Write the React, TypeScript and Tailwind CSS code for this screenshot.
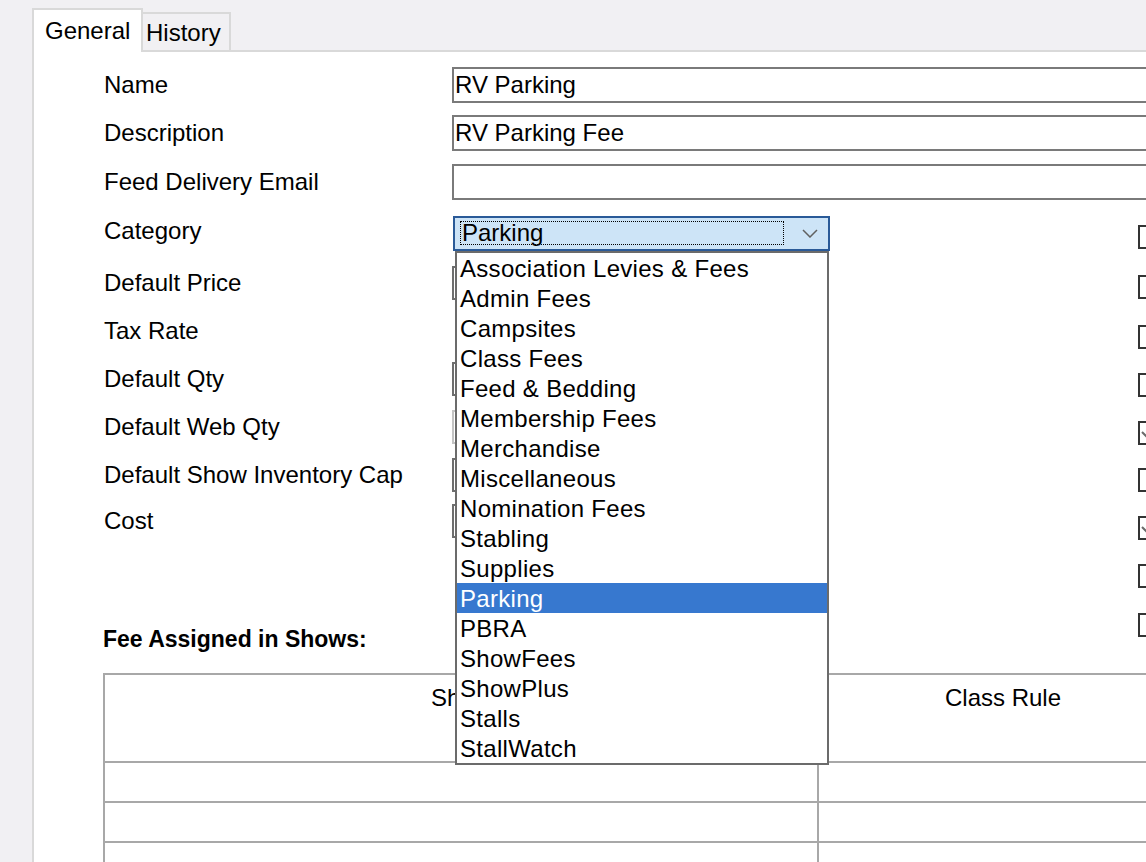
import React from 'react';

const categories = [
  'Association Levies & Fees',
  'Admin Fees',
  'Campsites',
  'Class Fees',
  'Feed & Bedding',
  'Membership Fees',
  'Merchandise',
  'Miscellaneous',
  'Nomination Fees',
  'Stabling',
  'Supplies',
  'Parking',
  'PBRA',
  'ShowFees',
  'ShowPlus',
  'Stalls',
  'StallWatch',
];

// right hand column of checkboxes, margin before each box
const checks = [
  { mt: 'mt-[18px]', on: false },
  { mt: 'mt-[26px]', on: false },
  { mt: 'mt-[26px]', on: false },
  { mt: 'mt-[24px]', on: false },
  { mt: 'mt-[24px]', on: true },
  { mt: 'mt-[23px]', on: false },
  { mt: 'mt-[24px]', on: true },
  { mt: 'mt-[24px]', on: false },
  { mt: 'mt-[25px]', on: false },
];

const TextRow: React.FC<{ label: string; value?: string; h: string }> = ({ label, value, h }) => (
  <div className={`flex items-center ${h}`}>
    <div className="w-[348px] shrink-0">{label}</div>
    <div className="w-[760px] h-[36px] shrink-0 border-2 border-[#7a7a7a] bg-white pl-px leading-[32px]">{value}</div>
  </div>
);

const HiddenRow: React.FC<{ label: string; h: string; field?: 'dark' | 'light' | 'none' }> = ({ label, h, field = 'dark' }) => (
  <div className={`flex items-center ${h}`}>
    <div className="w-[348px] shrink-0">{label}</div>
    {field !== 'none' && (
      <div
        className={`w-[200px] h-[34px] border-2 bg-white ${field === 'light' ? 'border-[#c4c4c4]' : 'border-[#6e6e6e]'}`}
      />
    )}
  </div>
);

const CategoryCombo: React.FC = () => (
  <div className="relative ml-px w-[377px] h-[35px] z-20">
    <div className="flex items-center h-full border-2 border-[#2a5a98] bg-[#cde4f7] pl-[5px]">
      <div className="w-[324px] h-[24px] border border-dotted border-black leading-[21px] pl-px">Parking</div>
      <svg className="ml-auto mr-[10px]" width="16" height="9" viewBox="0 0 16 9">
        <path d="M1 1 L8 8 L15 1" fill="none" stroke="#606060" strokeWidth="1.5" />
      </svg>
    </div>
    <ul className="absolute top-full left-[2px] w-[374px] border-2 border-[#6b6b6b] bg-white tracking-[0.3px]">
      {categories.map(c => (
        <li
          key={c}
          className={`h-[30px] leading-[32px] pl-[3px] whitespace-nowrap ${c === 'Parking' ? 'bg-[#3778cf] text-white' : ''}`}
        >
          {c}
        </li>
      ))}
    </ul>
  </div>
);

export default function App() {
  return (
    <div className="w-[1146px] h-[862px] overflow-hidden bg-[#f1f0f3] pl-[32px] pt-[8px] flex flex-col font-['Liberation_Sans',Arial,sans-serif] text-[24px] text-black">
      <div className="flex items-end h-[44px] shrink-0">
        <div className="w-[111px] h-[44px] border-2 border-b-0 border-[#d9d9d9] bg-white pl-[11px] leading-[42px]">General</div>
        <div className="w-[88px] h-[40px] border-2 border-l-0 border-[#d9d9d9] pl-[3px] leading-[38px]">History</div>
        <div className="flex-1 border-b-2 border-[#d9d9d9]" />
      </div>

      <div className="flex-1 border-l-2 border-[#d9d9d9] bg-white pl-[70px] pt-[9px]">
        <TextRow label="Name" value="RV Parking" h="h-[48px]" />
        <TextRow label="Description" value="RV Parking Fee" h="h-[48px]" />
        <TextRow label="Feed Delivery Email" h="h-[50px]" />

        <div className="flex items-start h-[418px]">
          <div className="w-[1034px] shrink-0">
            <div className="flex items-center h-[52px]">
              <div className="w-[348px] shrink-0 -mt-[4px]">Category</div>
              <CategoryCombo />
            </div>
            <HiddenRow label="Default Price" h="h-[48px]" />
            <HiddenRow label="Tax Rate" h="h-[48px]" field="none" />
            <HiddenRow label="Default Qty" h="h-[48px]" />
            <HiddenRow label="Default Web Qty" h="h-[48px]" field="light" />
            <HiddenRow label="Default Show Inventory Cap" h="h-[48px]" />
            <HiddenRow label="Cost" h="h-[44px]" />
          </div>
          <div className="flex flex-col shrink-0">
            {checks.map((c, i) => (
              <div key={i} className={`w-[24px] h-[24px] border-2 border-[#333] bg-white ${c.mt}`}>
                {c.on && (
                  <svg width="20" height="20" viewBox="0 0 20 20">
                    <polyline points="2,9 7,14 17,4" fill="none" stroke="#6a6a6a" strokeWidth="2" />
                  </svg>
                )}
              </div>
            ))}
          </div>
        </div>

        <div className="h-[28px] leading-[28px] font-bold text-[23px] -ml-px">Fee Assigned in Shows:</div>

        <table className="mt-[20px] -ml-[1px] w-[1200px] border-collapse">
          <thead>
            <tr className="h-[88px]">
              <th className="w-[714px] border-2 border-[#a8a8a8] align-top pt-[5px] font-normal">Show</th>
              <th className="w-[370px] border-2 border-[#a8a8a8] align-top pt-[5px] font-normal">Class Rule</th>
              <th className="border-2 border-[#a8a8a8]" />
            </tr>
          </thead>
          <tbody>
            {[0, 1, 2, 3].map(r => (
              <tr key={r} className="h-[40px]">
                <td className="border-2 border-[#a8a8a8]" />
                <td className="border-2 border-[#a8a8a8]" />
                <td className="border-2 border-[#a8a8a8]" />
              </tr>
            ))}
          </tbody>
        </table>
      </div>
    </div>
  );
}
